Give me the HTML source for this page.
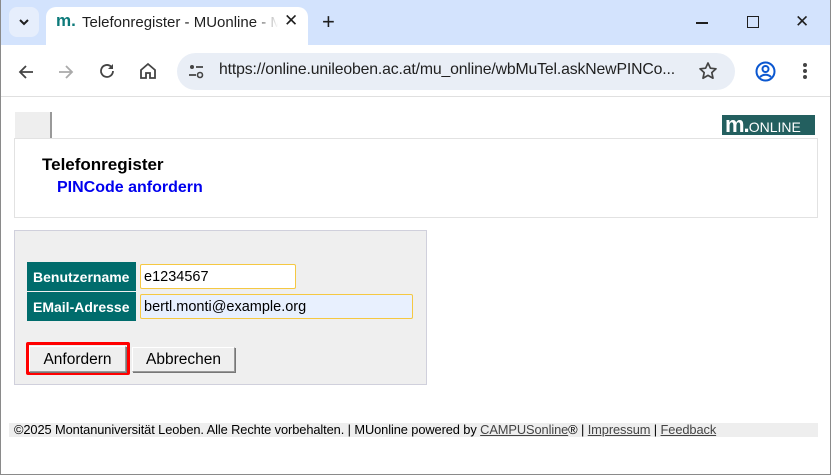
<!DOCTYPE html>
<html><head><style>
*{box-sizing:border-box;margin:0;padding:0}
body{width:831px;height:475px;overflow:hidden;background:#fff;font-family:"Liberation Sans",sans-serif;position:relative}
.a{position:absolute}
</style></head><body>
<div class="a" style="left:0;top:0;width:831px;height:475px;border:1px solid #8a8a8a;border-top:none"></div>
<div class="a" style="left:1px;top:0;width:829px;height:45px;background:#d3e3fd"></div>
<div class="a" style="left:9px;top:7px;width:30px;height:30px;border-radius:8px;background:#e6eefc"></div>
<svg class="a" style="left:17px;top:15px" width="14" height="14"><path d="M3 5l4 4 4-4" stroke="#1f1f1f" stroke-width="2" fill="none"/></svg>
<div class="a" style="left:46px;top:7px;width:262px;height:39px;background:#fff;border-radius:10px 10px 0 0"></div>
<div class="a" style="left:56px;top:11px;font-size:17px;font-weight:bold;color:#0d7a7a">m.</div>
<div class="a" style="left:82px;top:14px;font-size:15px;color:#1f1f1f;white-space:nowrap;width:196px;overflow:hidden;-webkit-mask-image:linear-gradient(90deg,#000 88%,transparent);mask-image:linear-gradient(90deg,#000 88%,transparent)">Telefonregister - MUonline - Mo</div>
<div class="a" style="left:284px;top:11px;font-size:17px;color:#1f1f1f">✕</div>
<div class="a" style="left:322px;top:9px;font-size:22px;color:#1f1f1f">+</div>
<div class="a" style="left:696px;top:22px;width:12px;height:1.5px;background:#1f1f1f"></div>
<div class="a" style="left:747px;top:16px;width:12px;height:12px;border:1.5px solid #1f1f1f"></div>
<div class="a" style="left:795px;top:12px;font-size:17px;color:#1f1f1f">✕</div>
<div class="a" style="left:1px;top:45px;width:829px;height:52px;background:#fff;border-bottom:1px solid #e0e0e0"></div>
<svg class="a" style="left:17px;top:63px" width="18" height="18"><path d="M16 9H3M9 3L3 9l6 6" stroke="#444" stroke-width="1.8" fill="none"/></svg>
<svg class="a" style="left:57px;top:63px" width="18" height="18"><path d="M2 9h13M9 3l6 6-6 6" stroke="#aaa" stroke-width="1.8" fill="none"/></svg>
<svg class="a" style="left:98px;top:62px" width="18" height="18"><path d="M15 9a6 6 0 1 1-2-4.5" stroke="#444" stroke-width="1.8" fill="none"/><path d="M15 2v5h-5z" fill="#444"/></svg>
<svg class="a" style="left:139px;top:62px" width="18" height="18"><path d="M2 8l7-6 7 6v8h-5v-5h-4v5H2z" stroke="#444" stroke-width="1.8" fill="none"/></svg>
<div class="a" style="left:177px;top:53px;width:558px;height:37px;border-radius:19px;background:#e9eef6"></div>
<svg class="a" style="left:188px;top:63px" width="16" height="16"><circle cx="4" cy="4" r="2" fill="#444"/><path d="M8 4h7M1 12h7" stroke="#444" stroke-width="1.8"/><circle cx="12" cy="12" r="2.5" stroke="#444" stroke-width="1.6" fill="none"/></svg>
<div class="a" style="left:219px;top:61px;font-size:15.8px;color:#1f1f1f;white-space:nowrap;letter-spacing:-0.15px">https://online.unileoben.ac.at/mu_online/wbMuTel.askNewPINCo...</div>
<svg class="a" style="left:698px;top:61px" width="20" height="20"><path d="M10 2l2.4 5.2 5.6.6-4.2 3.8 1.2 5.6L10 14.4 5 17.2l1.2-5.6L2 7.8l5.6-.6z" stroke="#444" stroke-width="1.7" fill="none" stroke-linejoin="round"/></svg>
<svg class="a" style="left:755px;top:61px" width="21" height="21"><circle cx="10.5" cy="10.5" r="9" stroke="#0b57d0" stroke-width="2" fill="none"/><circle cx="10.5" cy="8" r="3" stroke="#0b57d0" stroke-width="2" fill="none"/><path d="M5 16c3-3 8-3 11 0" stroke="#0b57d0" stroke-width="2" fill="none"/></svg>
<div class="a" style="left:803px;top:63px;width:4px;height:4px;border-radius:2px;background:#444;box-shadow:0 6px 0 #444,0 12px 0 #444"></div>

<div class="a" style="left:15px;top:112px;width:37px;height:27px;background:#eee;border-right:2px solid #999"></div>
<div class="a" style="left:722px;top:115px;width:93px;height:20px;background:#235f5f;color:#fff;font-weight:bold;line-height:20px;padding-left:3px;white-space:nowrap;overflow:hidden"><span style="font-size:22px;letter-spacing:-1px">m.</span><span style="font-size:14px;font-weight:normal">ONLINE</span></div>
<div class="a" style="left:14px;top:138px;width:804px;height:80px;border:1px solid #e2e2e2"></div>
<div class="a" style="left:42px;top:155px;font-size:17px;font-weight:bold;color:#000">Telefonregister</div>
<div class="a" style="left:57px;top:179px;font-size:16px;font-weight:bold;color:#0000ee">PINCode anfordern</div>

<div class="a" style="left:14px;top:230px;width:413px;height:155px;background:#efefef;border:1px solid #d0d0dc"></div>
<div class="a" style="left:27px;top:262px;width:109px;height:29px;background:#006c6c;color:#fff;font-size:14px;font-weight:bold;line-height:31px;padding-left:6px">Benutzername</div>
<div class="a" style="left:27px;top:292px;width:109px;height:29px;background:#006c6c;color:#fff;font-size:14px;font-weight:bold;line-height:31px;padding-left:6px">EMail-Adresse</div>
<div class="a" style="left:140px;top:264px;width:156px;height:25px;background:#fff;border:1px solid #f5c842;border-radius:2px;font-size:14.5px;line-height:24px;padding-left:3px">e1234567</div>
<div class="a" style="left:140px;top:294px;width:273px;height:25px;background:#e8f0fe;border:1px solid #f5c842;border-radius:2px;font-size:14.5px;line-height:24px;padding-left:3px">bertl.monti@example.org</div>
<div class="a" style="left:26px;top:342px;width:104px;height:33px;border:3px solid #f00;border-radius:2px"></div>
<div class="a" style="left:29px;top:346px;width:97px;height:26px;background:#efefef;border:1px solid #999;border-top-color:#fff;border-left-color:#fff;box-shadow:1px 1px 0 #777;font-size:15.5px;text-align:center;line-height:25px">Anfordern</div>
<div class="a" style="left:132px;top:347px;width:103px;height:25px;background:#efefef;border:1px solid #999;border-top-color:#fff;border-left-color:#fff;box-shadow:1px 1px 0 #777;font-size:15.5px;text-align:center;line-height:24px">Abbrechen</div>

<div class="a" style="left:9px;top:423px;width:809px;height:14px;background:#eee"></div>
<div class="a" style="left:14px;top:422px;font-size:12.85px;color:#000;white-space:nowrap;letter-spacing:-0.1px">©2025 Montanuniversität Leoben. Alle Rechte vorbehalten. | MUonline powered by <u style="color:#444">CAMPUSonline</u>® | <u style="color:#444">Impressum</u> | <u style="color:#444">Feedback</u></div>
</body></html>
